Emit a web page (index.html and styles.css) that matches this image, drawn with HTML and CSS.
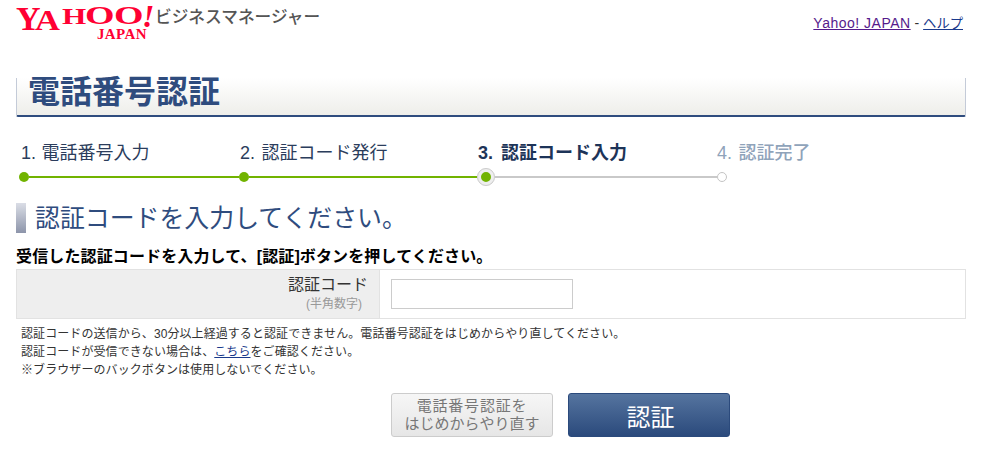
FILE: index.html
```html
<!DOCTYPE html>
<html lang="ja">
<head>
    <title>電話番号認証</title>
    <meta charset="UTF-8">
    <link rel="stylesheet" href="styles.css">
</head>
<body>
    <div class="page">
        <div class="header">
            <div class="brand">
                <div class="logo">
                    <div class="logo-main"><span class="ltr ltr-y">Y</span><span class="ltr ltr-a">A</span><span class="ltr ltr-h">H</span><span class="ltr ltr-o">O</span><span class="ltr ltr-o">O</span><span class="ltr ltr-bang">!</span></div>
                    <div class="logo-sub">JAPAN</div>
                </div>
                <div class="service">ビジネスマネージャー</div>
            </div>
            <div class="links"><a class="visited" href="#">Yahoo! JAPAN</a> - <a class="help" href="#">ヘルプ</a></div>
        </div>

        <h1 class="title">電話番号認証</h1>

        <div class="steps">
            <div class="step step-1 done">
                <div class="step-label">1. 電話番号入力</div>
                <div class="track"><span class="dot"></span><span class="line"></span></div>
            </div>
            <div class="step step-2 done">
                <div class="step-label">2. 認証コード発行</div>
                <div class="track"><span class="dot"></span><span class="line"></span></div>
            </div>
            <div class="step step-3 current">
                <div class="step-label">3. 認証コード入力</div>
                <div class="track"><span class="dot"></span><span class="line"></span></div>
            </div>
            <div class="step step-4 todo">
                <div class="step-label">4. 認証完了</div>
                <div class="track"><span class="dot"></span></div>
            </div>
        </div>

        <h2 class="heading">認証コードを入力してください。</h2>
        <p class="lead">受信した認証コードを入力して、[認証]ボタンを押してください。</p>

        <div class="form-row">
            <div class="form-label">
                <div>認証コード</div>
                <div class="hint">(半角数字)</div>
            </div>
            <div class="form-field"><input class="code-input" type="text"></div>
        </div>

        <div class="notes">
            <p>認証コードの送信から、30分以上経過すると認証できません。電話番号認証をはじめからやり直してください。</p>
            <p>認証コードが受信できない場合は、<a href="#">こちら</a>をご確認ください。</p>
            <p>※ブラウザーのバックボタンは使用しないでください。</p>
        </div>

        <div class="actions">
            <button type="button" class="btn btn-restart"><span class="btn-first">電話番号認証を</span><br>はじめからやり直す</button>
            <button type="button" class="btn btn-submit">認証</button>
        </div>
    </div>
</body>
</html>
```

FILE: styles.css
```css
body {
    margin: 0;
    background: #fff;
    color: #333;
    font-family: "Liberation Sans", "Noto Sans CJK JP", sans-serif;
}

a { color: #1a3a8c; }
a.visited { color: #551a8b; }

p { margin: 0; }

.page {
    width: 950px;
    margin-left: 16px;
}

/* header */
.header {
    display: flex;
    justify-content: space-between;
    height: 78px;
}

.brand {
    display: flex;
    align-items: flex-start;
}

.logo {
    width: 139px;
    padding-top: 6px;
    font-family: "Liberation Serif", serif;
    font-weight: bold;
    color: #ff0033;
    text-align: right;
}

.logo-main {
    height: 26px;
    font-size: 34px;
    line-height: 26px;
    white-space: nowrap;
    text-align: left;
}

.ltr {
    display: inline-block;
    line-height: 0;
    transform-origin: left center;
}

.ltr-y { width: 19px; font-size: 34px; }
.ltr-a { width: 27px; font-size: 30px; transform: scaleX(1.15); }
.ltr-h { width: 23px; font-size: 24px; vertical-align: 6px; transform: scaleX(1.3); }
.ltr-o { width: 28.5px; font-size: 25px; vertical-align: 6px; transform: scaleX(1.52); }
.ltr-bang { font-size: 32px; font-style: italic; vertical-align: 3px; }

.logo-sub {
    margin: -4px 8px 0 0;
    font-size: 15px;
    line-height: 12px;
    letter-spacing: 0.4px;
}

.service {
    margin: 8px 0 0;
    font-size: 16.7px;
    line-height: 20px;
    font-weight: 500;
    color: #555;
    white-space: nowrap;
}

.links {
    margin: 14px 3px 0 0;
    font-size: 14px;
    line-height: 18px;
}

.links .visited { letter-spacing: 0.5px; }
.links .help { font-size: 13.3px; }

/* page title */
.title {
    margin: 0;
    height: 37px;
    padding-left: 11px;
    border-left: 1px solid #c4cbd8;
    border-right: 1px solid #c4cbd8;
    border-bottom: 2px solid #2f4c7e;
    border-radius: 0 0 2px 2px;
    background: linear-gradient(#fff, #eeeeea);
    color: #2f4c7e;
    font-size: 32px;
    line-height: 29px;
    font-weight: bold;
}

/* steps */
.steps {
    display: flex;
    margin: 23px 0 0 3px;
}

.step-1 { width: 220px; }
.step-2 { width: 238px; }
.step-3 { width: 240px; }
.step-4 { width: 120px; }

.step-label {
    padding-left: 2px;
    height: 28px;
    font-size: 18px;
    line-height: 26px;
    word-spacing: 0.5px;
    color: #2b3d5c;
    white-space: nowrap;
}

.step-2 .step-label { padding-left: 1px; word-spacing: 1.5px; }
.step-3 .step-label { padding-left: 1px; font-weight: bold; color: #1d3458; word-spacing: 3px; }
.step-4 .step-label { padding-left: 0; font-weight: 500; color: #8fa3ba; word-spacing: 1.5px; }

.track {
    display: flex;
    align-items: center;
    height: 18px;
}

.dot {
    flex: none;
    width: 10px;
    height: 10px;
    border-radius: 50%;
    background: #71b300;
}

.line {
    flex: 1;
    height: 2px;
    background: #71b300;
}

.current .line { background: #c9c9c9; }

.current .dot {
    box-sizing: border-box;
    width: 18px;
    height: 18px;
    background: #71b300;
    border: 4px solid #eee;
    outline: 1px solid #ccc;
    outline-offset: -1px;
}

.todo .dot {
    box-sizing: border-box;
    background: #fff;
    border: 1px solid #c4c4c4;
}

/* form */
.heading {
    margin: 17px 0 0;
    height: 30px;
    padding-left: 9px;
    border-left: 10px solid #a9afc0;
    border-image: linear-gradient(#dde0e8, #8a92a8) 1;
    font-size: 24.9px;
    line-height: 30px;
    font-weight: normal;
    color: #2f4c7e;
    white-space: nowrap;
}

.lead {
    margin-top: 14px;
    font-size: 16px;
    line-height: 20px;
    letter-spacing: 0.13px;
    font-weight: bold;
    color: #000;
}

.form-row {
    display: flex;
    height: 48px;
    margin-top: 2px;
    border: 1px solid #e2e2e2;
}

.form-label {
    box-sizing: border-box;
    width: 363px;
    padding: 6px 11px 0 0;
    background: #eee;
    border-right: 1px solid #e2e2e2;
    font-size: 16px;
    line-height: 18px;
    text-align: right;
}

.hint {
    margin-right: 6px;
    font-size: 12px;
    line-height: 20px;
    color: #999;
}

.form-field {
    padding: 9px 0 0 11px;
}

.code-input {
    display: block;
    box-sizing: border-box;
    width: 182px;
    height: 30px;
    margin: 0;
    padding: 0 4px;
    background: #fff;
    border: 1px solid #ccc;
}

.notes {
    margin: 6px 0 0 5px;
    font-size: 12px;
    line-height: 18px;
    letter-spacing: 0.08px;
    color: #333;
}

/* buttons */
.actions {
    display: flex;
    gap: 15px;
    margin: 14px 0 0 375px;
}

.btn {
    box-sizing: border-box;
    height: 44px;
    padding: 0;
    border-radius: 3px;
    font-family: inherit;
    cursor: pointer;
}

.btn-restart {
    width: 162px;
    background: linear-gradient(#f6f6f6, #e6e6e6);
    border: 1px solid #ccc;
    color: #777;
    font-size: 15px;
    line-height: 18px;
}

.btn-first { letter-spacing: 0.8px; }

.btn-submit {
    width: 162px;
    padding-left: 3px;
    background: linear-gradient(#55749f, #2b4a7c);
    border: 1px solid #2b4a7c;
    color: #fff;
    font-size: 24px;
}
```
